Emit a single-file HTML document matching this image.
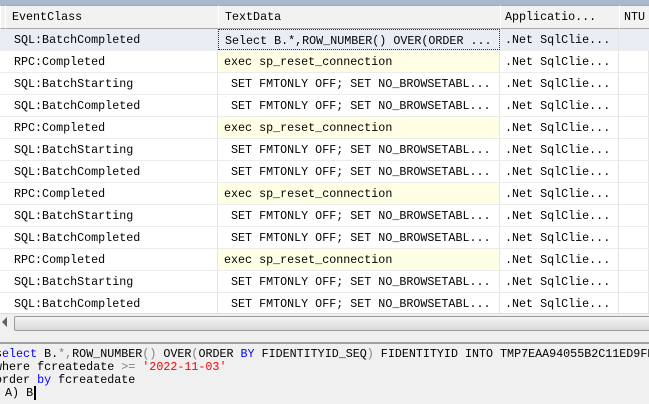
<!DOCTYPE html>
<html><head><style>
body{margin:0;width:649px;height:402px;overflow:hidden;background:#f0f0f0;font-family:"Liberation Mono","Noto Sans CJK SC",monospace;font-size:11.7px;color:#000;position:relative}
.top{position:absolute;left:0;top:0;width:649px;height:5px;background:#a9b8cc}
.grid{position:absolute;left:0;top:5px;width:649px;height:308px;background:#fff;overflow:hidden}
.row{position:absolute;left:0;width:649px;height:22px;border-bottom:1px solid #ececec;box-sizing:border-box}
.c{position:absolute;top:0;height:21px;line-height:22px;border-right:1px solid #e4e4e4;box-sizing:border-box;white-space:pre;overflow:hidden}
.hdr .c{background:#f2f2f2;border:1px solid #a8a8a8;border-left:1px solid #fff;height:24px;line-height:23px}
.y{background:#ffffe6}
.sb{position:absolute;left:0;top:313px;width:649px;height:17px;background:#f0f0f0;border-top:1px solid #ddd}
.thumb{position:absolute;left:14px;top:2px;width:640px;height:13px;background:linear-gradient(#f4f4f4,#d8d8d8);border:1px solid #9c9c9c;border-radius:2px}
.ed{position:absolute;left:0;top:342px;width:649px;height:60px;border-top:2px solid #a0a0a0;background:#f0f0f0}
.l{position:absolute;left:0;white-space:pre;line-height:13px}
.k{color:#0000ff}.s{color:#ff0000}.g{color:#808080}
</style></head><body>
<div class="top"></div>
<div class="grid">
<div class="row hdr" style="top:0;height:24px;border:none">
<div class="c" style="left:0;width:6px"></div>
<div class="c" style="left:5px;width:214px;padding-left:6px">EventClass</div>
<div class="c" style="left:218px;width:283px;padding-left:6px">TextData</div>
<div class="c" style="left:500px;width:120px;padding-left:4px">Applicatio...</div>
<div class="c" style="left:619px;width:40px;padding-left:4px">NTU</div>
</div>
<div class="row" style="top:24px;background:#e9eef4">
<div class="c" style="left:5px;width:213px;padding-left:9px">SQL:BatchCompleted</div>
<div class="c" style="left:218px;width:282px;padding-left:6px;border:1px dotted #333">Select B.*,ROW_NUMBER() OVER(ORDER ...</div>
<div class="c" style="left:500px;width:119px;padding-left:5px">.Net SqlClie...</div>
</div>
</div>
<div class="sb"><div style="position:absolute;left:2px;top:3px;width:0;height:0;border:5px solid transparent;border-right:5px solid #606060;border-left:0"></div><div class="thumb"></div></div>
<div class="ed">
<div class="l" style="top:4px;left:-5px">s<span class="k">elect</span> B.<span class="g">*,</span>ROW_NUMBER<span class="g">()</span> OVER<span class="g">(</span>ORDER <span class="k">BY</span> FIDENTITYID_SEQ<span class="g">)</span> FIDENTITYID INTO TMP7EAA94055B2C11ED9FD</div>
<div class="l" style="top:17px;left:-5px">where fcreatedate <span class="g">&gt;=</span> <span class="s">'2022-11-03'</span></div>
<div class="l" style="top:30px;left:-5px">order <span class="k">by</span> fcreatedate</div>
<div class="l" style="top:43px;left:-9px">  A) B<span style="border-left:2px solid #000;margin-left:1px"></span></div>
</div>
<script>
var rows=[["RPC:Completed","exec sp_reset_connection",1],["SQL:BatchStarting"," SET FMTONLY OFF; SET NO_BROWSETABL...",0],["SQL:BatchCompleted"," SET FMTONLY OFF; SET NO_BROWSETABL...",0]];
var g=document.querySelector('.grid'),h='';
for(var i=0;i<12;i++){var r=rows[i%3];var t=46+i*22;
h+='<div class="row" style="top:'+t+'px"><div class="c" style="left:5px;width:213px;padding-left:9px">'+r[0]+'</div><div class="c'+(r[2]?' y':'')+'" style="left:218px;width:282px;padding-left:6px">'+r[1]+'</div><div class="c" style="left:500px;width:119px;padding-left:5px">.Net SqlClie...</div><div class="c" style="left:619px;width:30px"></div></div>';}
g.insertAdjacentHTML('beforeend',h);
</script>
</body></html>
